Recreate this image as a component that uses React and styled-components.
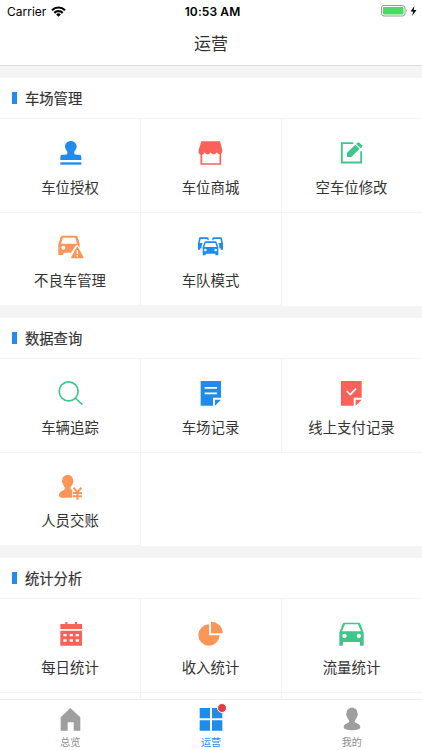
import React from "react";
import styled, { createGlobalStyle } from "styled-components";

const BLUE = "#1f8ceb";
const RED = "#fb6159";
const GREEN = "#3ec78a";
const ORANGE = "#fb9658";

const StampIcon = () => (
  <Icon viewBox="0 0 75 75" fill={BLUE}>
    <path d="M38.500 0C49 0 56 7.500 56 17C56 25 48.500 29 48.500 35Q48.500 41 55 41H64Q70 41 70 48V57H7V48Q7 41 13 41H22Q28.500 41 28.500 35C28.500 29 21 25 21 17C21 7.500 28 0 38.500 0Z" />
    <rect x="7" y="64" width="63" height="7" />
  </Icon>
);

const ShopIcon = () => (
  <Icon viewBox="0 0 75 75" fill={RED}>
    <path d="M10 1H66L73 27V30A9 9 0 0 1 56 34A9.500 9.500 0 0 1 38 34A9.500 9.500 0 0 1 20 34A9 9 0 0 1 2 30V27Z" />
    <path d="M10 34V69H67V34" fill="none" stroke={RED} strokeWidth="5" />
  </Icon>
);

const EditIcon = () => (
  <Icon viewBox="0 0 75 75" fill={GREEN}>
    <path d="M43 6.500H8.500V64.500H66.500V31" fill="none" stroke={GREEN} strokeWidth="5.500" />
    <path d="M24 35L49 11L62 23L37 48H24Z" />
    <path d="M51 9L55 5Q58 3 61 5L69 13Q71 16 69 18L65 22Z" />
  </Icon>
);

const CarWarningIcon = () => (
  <Icon viewBox="0 0 75 75" fill={ORANGE}>
    <path
      fillRule="evenodd"
      d="M14 2H54Q58 2 59 6L65 27V38L58 30Q55 29 52 33L39 53H16V60H1V28L8 6Q9 2 14 2ZM15 8L9 26H57L52 8ZM22 38A6 6 0 1 0 10 38A6 6 0 1 0 22 38Z"
    />
    <path
      fillRule="evenodd"
      d="M55 38Q58 34 61 38L76 65Q78 70 73 70H43Q38 70 40 65ZM56 46V58H60V46ZM56 61V65H60V61Z"
    />
  </Icon>
);

const FleetIcon = () => (
  <Icon viewBox="0 0 75 75" fill={BLUE}>
    <path d="M5 7H28Q32 7 32 11V16H28V12H8L5 24H14L11 32V40H7V44H0V25L3 11Q4 7 5 7Z" />
    <path d="M70 7H47Q43 7 43 11V16H47V12H67L70 24H61L64 32V40H68V44H75V25L72 11Q71 7 70 7Z" />
    <path
      fillRule="evenodd"
      d="M22 19H53Q55 19 56 22L61 36V61H52V56H23V61H14V36L19 22Q20 19 22 19ZM23 24L19 36H56L52 24ZM26 45A4 4 0 1 0 18 45A4 4 0 1 0 26 45ZM57 45A4 4 0 1 0 49 45A4 4 0 1 0 57 45Z"
    />
  </Icon>
);

const SearchIcon = () => (
  <Icon viewBox="0 0 75 75" fill="none" stroke={GREEN} strokeWidth="5">
    <circle cx="32" cy="31" r="28.500" />
    <path d="M52 51L73 71" />
  </Icon>
);

const NoteIcon = () => (
  <Icon viewBox="0 0 75 75" fill={BLUE}>
    <path d="M8 0H69V50H45V74H8Z" />
    <path d="M51 56H69L51 74Z" />
    <path d="M20 20.500H57M20 37H57" stroke="#fff" strokeWidth="5" />
  </Icon>
);

const CheckNoteIcon = () => (
  <Icon viewBox="0 0 75 75" fill={RED}>
    <path d="M6 0H68V50H44V74H6Z" />
    <path d="M50 56H68L50 74Z" />
    <path d="M23 30L34 41L51 23" fill="none" stroke="#fff" strokeWidth="5" />
  </Icon>
);

const CashierIcon = () => (
  <Icon viewBox="0 0 75 75" fill={ORANGE}>
    <path d="M29 0C40 0 45 7 45 16Q48 19 45 23C43 31 38 34 37 38Q36 43 43 46V68H10Q3 68 3 61C3 47 21 48 21 39C20 34 15 31 13 23Q10 19 13 16C13 7 18 0 29 0Z" />
    <path
      d="M47 38L58.500 52L70 38M58.500 52V74M45 54H72M45 64H72"
      fill="none"
      stroke={ORANGE}
      strokeWidth="6"
    />
  </Icon>
);

const CalendarIcon = () => (
  <Icon viewBox="0 0 75 75" fill={RED}>
    <path d="M7 9H22V3H28V9H51V3H57V9H72V24H7Z" />
    <path
      fillRule="evenodd"
      d="M7 29H72V74H7ZM16 39V46H26V39ZM35 39V46H45V39ZM53 39V46H63V39ZM16 55V62H26V55ZM35 55V62H45V55ZM53 55V62H63V55Z"
    />
  </Icon>
);

const PieIcon = () => (
  <Icon viewBox="0 0 75 75" fill={ORANGE}>
    <path d="M33 10V43H65A32 32 0 1 1 33 10Z" />
    <path d="M39 2A35 35 0 0 1 74 37H39Z" />
  </Icon>
);

const CarIcon = () => (
  <Icon viewBox="0 0 75 75" fill={GREEN}>
    <path
      fillRule="evenodd"
      d="M16 5H60Q63 5 64 8L74 35V74H63V63H12V74H1V35L11 8Q12 5 16 5ZM18 10L9 31H66L57 10ZM23 45A6.500 6.500 0 1 0 10 45A6.500 6.500 0 1 0 23 45ZM66 45A6.500 6.500 0 1 0 53 45A6.500 6.500 0 1 0 66 45Z"
    />
  </Icon>
);

const HomeIcon = () => (
  <TabIcon viewBox="0 0 72 72" fill="#9f9f9f">
    <path d="M37 0L67 28V68H47V43H29V68H8V28Z" />
  </TabIcon>
);

const GridIcon = () => (
  <TabIcon viewBox="0 0 72 72" fill={BLUE}>
    <path d="M2 0H33V31H2ZM39 0H70V31H39ZM2 37H33V68H2ZM39 37H70V68H39Z" />
  </TabIcon>
);

const UserIcon = () => (
  <TabIcon viewBox="0 0 72 72" fill="#9f9f9f">
    <path d="M36 -1C47 -1 52 6 52 15Q56 19 52 24C50 32 45 35 44 40C43 48 61 44 61 58Q61 66 36 67Q11 66 11 58C11 44 29 48 28 40C27 35 22 32 20 24Q16 19 20 15C20 6 25 -1 36 -1Z" />
  </TabIcon>
);

const sections = [
  {
    title: "车场管理",
    items: [
      { label: "车位授权", icon: StampIcon },
      { label: "车位商城", icon: ShopIcon },
      { label: "空车位修改", icon: EditIcon },
      { label: "不良车管理", icon: CarWarningIcon },
      { label: "车队模式", icon: FleetIcon },
      {},
    ],
  },
  {
    title: "数据查询",
    items: [
      { label: "车辆追踪", icon: SearchIcon },
      { label: "车场记录", icon: NoteIcon },
      { label: "线上支付记录", icon: CheckNoteIcon },
      { label: "人员交账", icon: CashierIcon },
      {},
    ],
  },
  {
    title: "统计分析",
    items: [
      { label: "每日统计", icon: CalendarIcon },
      { label: "收入统计", icon: PieIcon },
      { label: "流量统计", icon: CarIcon },
      {},
      {},
      {},
    ],
  },
];

export default function App() {
  return (
    <>
      <GlobalStyle />
      <Screen>
        <StatusBar>
          <Carrier>
            Carrier
            <svg width="15" height="11" viewBox="0 0 15 11" fill="none" stroke="#000" strokeWidth="2.200">
              <path d="M1 4.200A9.200 9.200 0 0 1 14 4.200M3.300 6.900A6 6 0 0 1 11.700 6.900" />
              <path d="M7.500 10.800L5.100 8.500A3.400 3.400 0 0 1 9.900 8.500Z" fill="#000" stroke="none" />
            </svg>
          </Carrier>
          <Clock>10:53 AM</Clock>
          <Power>
            <svg width="37" height="12" viewBox="0 0 37 12">
              <rect x="0.500" y="0.500" width="23.500" height="10.500" rx="2.500" fill="#fff" stroke="#999" />
              <rect x="2" y="2" width="20.500" height="7.500" rx="1" fill="#4cd964" />
              <path d="M25.200 4Q27 5.700 25.200 7.500Z" fill="#999" />
              <path d="M33.500 1L29.500 6.500H32.300L31 11L35.500 5H32.600Z" />
            </svg>
          </Power>
        </StatusBar>
        <NavBar>运营</NavBar>
        <Content>
          {sections.map((section) => (
            <Section key={section.title}>
              <SectionTitle>
                <span>{section.title}</span>
              </SectionTitle>
              <Grid>
                {section.items.map(({ label, icon: ItemIcon }, i) => (
                  <Cell key={i}>
                    {ItemIcon && <ItemIcon />}
                    {label && <Label>{label}</Label>}
                  </Cell>
                ))}
              </Grid>
            </Section>
          ))}
        </Content>
        <TabBar>
          <Tab>
            <HomeIcon />
            总览
          </Tab>
          <Tab $active>
            <IconWrap>
              <GridIcon />
              <Badge />
            </IconWrap>
            运营
          </Tab>
          <Tab>
            <UserIcon />
            我的
          </Tab>
        </TabBar>
      </Screen>
    </>
  );
}

const GlobalStyle = createGlobalStyle`
  * {
    box-sizing: border-box;
  }

  body {
    margin: 0;
    font-family: Inter, "Noto Sans CJK SC", sans-serif;
    color: #333;
  }
`;

const Screen = styled.div`
  display: flex;
  flex-direction: column;
  height: 750px;
  overflow: hidden;
  background: #fff;
`;

const StatusBar = styled.header`
  display: grid;
  grid-template-columns: 1fr auto 1fr;
  align-items: center;
  flex: none;
  height: 22px;
  padding: 0 4px 0 7px;
  color: #000;
  font-size: 12px;
`;

const Carrier = styled.div`
  display: flex;
  align-items: center;
  gap: 5px;
`;

const Clock = styled.div`
  font-weight: 600;
  letter-spacing: 0.1px;
`;

const Power = styled.div`
  display: flex;
  justify-content: flex-end;
`;

const NavBar = styled.div`
  display: flex;
  align-items: center;
  justify-content: center;
  flex: none;
  height: 44px;
  padding-bottom: 2px;
  border-bottom: 1px solid #dcdcdc;
  font-size: 17px;
`;

const Content = styled.main`
  flex: 1;
  min-height: 0;
  padding-top: 12px;
  overflow: hidden;
  background: #f4f4f4;
`;

const Section = styled.section`
  margin-bottom: 12px;
  background: #fff;
`;

const SectionTitle = styled.h2`
  display: flex;
  align-items: center;
  height: 41px;
  margin: 0;
  padding-left: 12px;
  border-bottom: 1px solid #f3f3f3;
  font-size: 14.3px;
  font-weight: 400;
  -webkit-text-stroke: 0.2px #333;

  &::before {
    content: "";
    width: 5px;
    height: 12px;
    margin-right: 8px;
    background: ${BLUE};
  }

  span {
    padding-bottom: 2px;
  }
`;

const Grid = styled.div`
  display: grid;
  grid-template-columns: 140px 141px 1fr;
  grid-auto-rows: 93.5px;
`;

const Cell = styled.div`
  display: flex;
  flex-direction: column;
  align-items: center;
  padding: 22px 1px 0 0;
  border-left: 1px solid #f3f3f3;
  border-bottom: 1px solid #f3f3f3;

  &:nth-child(3n + 1) {
    padding-right: 0;
    border-left: none;
  }

  &:empty:last-child {
    border-bottom: none;
  }
`;

const Icon = styled.svg`
  flex: none;
  width: 25px;
  height: 25px;
  overflow: visible;
`;

const Label = styled.span`
  margin-top: 11.5px;
  font-size: 14.4px;
  line-height: 20px;
`;

const TabBar = styled.nav`
  display: grid;
  grid-template-columns: repeat(3, 1fr);
  flex: none;
  height: 51px;
  border-top: 1px solid #ececec;
  background: #fff;
`;

const Tab = styled.div`
  display: flex;
  flex-direction: column;
  align-items: center;
  gap: 3px;
  padding-top: 8px;
  color: ${({ $active }) => ($active ? BLUE : "#8c8c8c")};
  font-size: 10px;
  line-height: 14px;
`;

const TabIcon = styled.svg`
  display: block;
  flex: none;
  width: 24px;
  height: 24px;
  overflow: visible;
`;

const IconWrap = styled.div`
  position: relative;
`;

const Badge = styled.span`
  position: absolute;
  top: -5px;
  right: -4px;
  width: 10px;
  height: 10px;
  border: 1px solid #fff;
  border-radius: 50%;
  background: #e93b3d;
`;
